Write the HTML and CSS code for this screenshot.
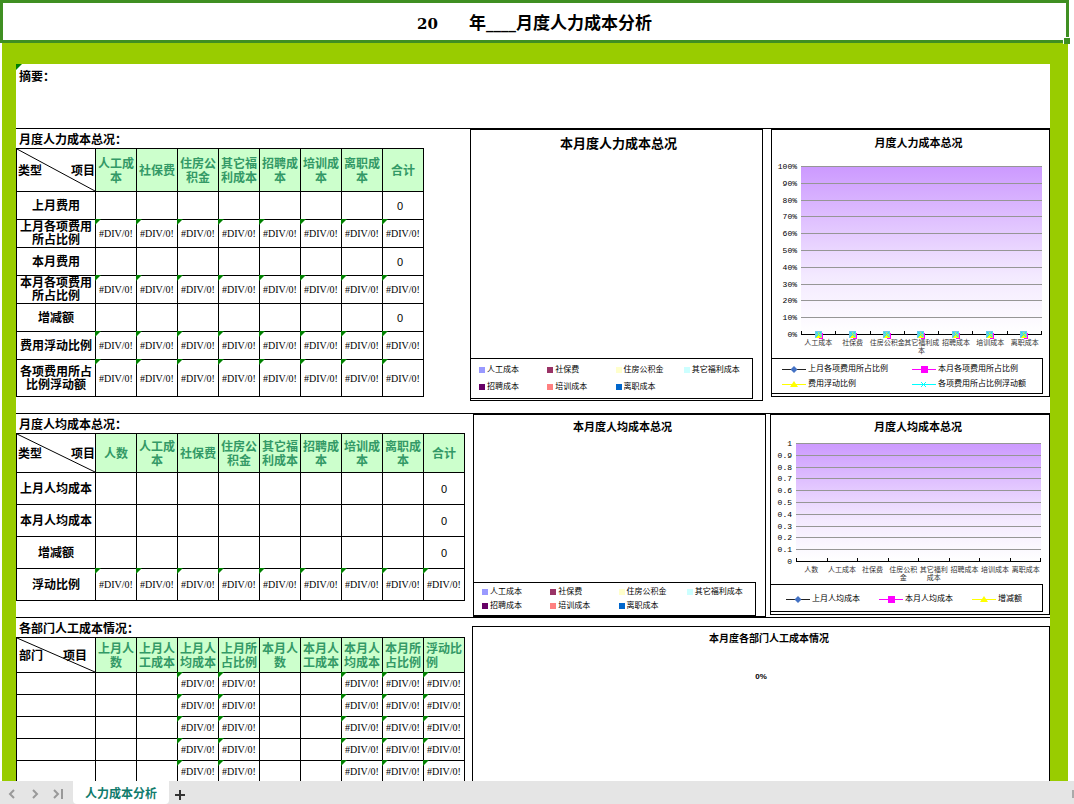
FILE: index.html
```
<!DOCTYPE html>
<html lang="zh-CN">
<head>
<meta charset="utf-8">
<title>人力成本分析</title>
<link rel="stylesheet" href="styles.css">
</head>
<body>
<svg class="defs" width="0" height="0" aria-hidden="true">
  <symbol id="k-diamond" viewBox="0 0 24 8"><path d="M0 4.5H24" stroke="#222" stroke-width="1"/><path d="M12 1l3.500 3.500-3.500 3.500-3.500-3.500z" fill="#4472c4"/></symbol>
  <symbol id="k-square" viewBox="0 0 24 8"><path d="M0 4.500H24" stroke="#f0f" stroke-width="1"/><path d="M9 1h7v7H9z" fill="#f0f"/></symbol>
  <symbol id="k-triangle" viewBox="0 0 24 8"><path d="M0 4.500H24" stroke="#ff0" stroke-width="1"/><path d="M12 1l4 6H8z" fill="#ff0"/></symbol>
  <symbol id="k-cross" viewBox="0 0 24 8"><path d="M0 4.500H24M9 2l5 5M14 2l-5 5" stroke="#0ff" stroke-width="1"/></symbol>
  <symbol id="k-point" viewBox="0 0 8 8"><path d="M4 2h4v6H4z" fill="#f0f"/><path d="M0 0h7v7H0z" fill="#6fc8e8"/><path d="M4 1l3 6H1z" fill="#ff0"/><path d="M1 1l5 5M6 1L1 6" stroke="#1ee" stroke-width="1"/></symbol>
</svg>
<main class="sheet">
  <h1 class="title"><span class="latin">20</span><span class="blank"></span>年<span class="latin">____</span>月度人力成本分析</h1>
  <div class="frame">
    <div class="content">
      <section class="summary flag">摘要：</section>

      <section class="block block-total">
        <div class="data">
          <h2>月度人力成本总况：</h2>
          <table class="grid cols8">
            <thead><tr class="r43"><th class="corner"><svg viewBox="0 0 100 100" preserveAspectRatio="none"><path d="M0 0L100 100"/></svg><span class="pair"><span>类型</span><span>项目</span></span></th><th>人工成本</th><th>社保费</th><th>住房公积金</th><th>其它福利成本</th><th>招聘成本</th><th>培训成本</th><th>离职成本</th><th>合计</th></tr></thead>
            <tbody>
              <tr class="r28"><th>上月费用</th><td></td><td></td><td></td><td></td><td></td><td></td><td></td><td class="sum">0</td></tr>
              <tr class="r28 err"><th>上月各项费用所占比例</th><td>#DIV/0!</td><td>#DIV/0!</td><td>#DIV/0!</td><td>#DIV/0!</td><td>#DIV/0!</td><td>#DIV/0!</td><td>#DIV/0!</td><td>#DIV/0!</td></tr>
              <tr class="r28"><th>本月费用</th><td></td><td></td><td></td><td></td><td></td><td></td><td></td><td class="sum">0</td></tr>
              <tr class="r28 err"><th>本月各项费用所占比例</th><td>#DIV/0!</td><td>#DIV/0!</td><td>#DIV/0!</td><td>#DIV/0!</td><td>#DIV/0!</td><td>#DIV/0!</td><td>#DIV/0!</td><td>#DIV/0!</td></tr>
              <tr class="r28"><th>增减额</th><td></td><td></td><td></td><td></td><td></td><td></td><td></td><td class="sum">0</td></tr>
              <tr class="r28 err"><th>费用浮动比例</th><td>#DIV/0!</td><td>#DIV/0!</td><td>#DIV/0!</td><td>#DIV/0!</td><td>#DIV/0!</td><td>#DIV/0!</td><td>#DIV/0!</td><td>#DIV/0!</td></tr>
              <tr class="r37 err"><th>各项费用所占比例浮动额</th><td>#DIV/0!</td><td>#DIV/0!</td><td>#DIV/0!</td><td>#DIV/0!</td><td>#DIV/0!</td><td>#DIV/0!</td><td>#DIV/0!</td><td>#DIV/0!</td></tr>
            </tbody>
          </table>
        </div>
        <figure class="chart pie pie-total">
          <figcaption class="big">本月度人力成本总况</figcaption>
          <ul class="legend squares">
            <li><i class="c1"></i>人工成本</li><li><i class="c2"></i>社保费</li><li><i class="c3"></i>住房公积金</li><li><i class="c4"></i>其它福利成本</li>
            <li><i class="c5"></i>招聘成本</li><li><i class="c6"></i>培训成本</li><li><i class="c7"></i>离职成本</li>
          </ul>
        </figure>
        <figure class="chart line line-total">
          <figcaption>月度人力成本总况</figcaption>
          <div class="plotrow">
            <div class="yaxis"><span>100%</span><span>90%</span><span>80%</span><span>70%</span><span>60%</span><span>50%</span><span>40%</span><span>30%</span><span>20%</span><span>10%</span><span>0%</span></div>
            <div class="plot">
              <div class="rules"><b></b><b></b><b></b><b></b><b></b><b></b><b></b><b></b><b></b><b></b></div>
              <div class="ticks"><span><svg><use href="#k-point"/></svg></span><span><svg><use href="#k-point"/></svg></span><span><svg><use href="#k-point"/></svg></span><span><svg><use href="#k-point"/></svg></span><span><svg><use href="#k-point"/></svg></span><span><svg><use href="#k-point"/></svg></span><span><svg><use href="#k-point"/></svg></span></div>
            </div>
          </div>
          <div class="xaxis"><span>人工成本</span><span>社保费</span><span>住房公积金</span><span>其它福利成<br>本</span><span>招聘成本</span><span>培训成本</span><span>离职成本</span></div>
          <ul class="legend keys two">
            <li><svg><use href="#k-diamond"/></svg>上月各项费用所占比例</li><li><svg><use href="#k-square"/></svg>本月各项费用所占比例</li>
            <li><svg><use href="#k-triangle"/></svg>费用浮动比例</li><li><svg><use href="#k-cross"/></svg>各项费用所占比例浮动额</li>
          </ul>
        </figure>
      </section>

      <section class="block block-avg">
        <div class="data">
          <h2>月度人均成本总况：</h2>
          <table class="grid cols9">
            <thead><tr class="r39"><th class="corner"><svg viewBox="0 0 100 100" preserveAspectRatio="none"><path d="M0 0L100 100"/></svg><span class="pair"><span>类型</span><span>项目</span></span></th><th>人数</th><th>人工成本</th><th>社保费</th><th>住房公积金</th><th>其它福利成本</th><th>招聘成本</th><th>培训成本</th><th>离职成本</th><th>合计</th></tr></thead>
            <tbody>
              <tr class="r32"><th>上月人均成本</th><td></td><td></td><td></td><td></td><td></td><td></td><td></td><td></td><td class="sum">0</td></tr>
              <tr class="r32"><th>本月人均成本</th><td></td><td></td><td></td><td></td><td></td><td></td><td></td><td></td><td class="sum">0</td></tr>
              <tr class="r32"><th>增减额</th><td></td><td></td><td></td><td></td><td></td><td></td><td></td><td></td><td class="sum">0</td></tr>
              <tr class="r32 err"><th>浮动比例</th><td>#DIV/0!</td><td>#DIV/0!</td><td>#DIV/0!</td><td>#DIV/0!</td><td>#DIV/0!</td><td>#DIV/0!</td><td>#DIV/0!</td><td>#DIV/0!</td><td>#DIV/0!</td></tr>
            </tbody>
          </table>
        </div>
        <figure class="chart pie pie-avg">
          <figcaption>本月度人均成本总况</figcaption>
          <ul class="legend squares">
            <li><i class="c1"></i>人工成本</li><li><i class="c2"></i>社保费</li><li><i class="c3"></i>住房公积金</li><li><i class="c4"></i>其它福利成本</li>
            <li><i class="c5"></i>招聘成本</li><li><i class="c6"></i>培训成本</li><li><i class="c7"></i>离职成本</li>
          </ul>
        </figure>
        <figure class="chart line line-avg">
          <figcaption>月度人均成本总况</figcaption>
          <div class="plotrow">
            <div class="yaxis"><span>1</span><span>0.9</span><span>0.8</span><span>0.7</span><span>0.6</span><span>0.5</span><span>0.4</span><span>0.3</span><span>0.2</span><span>0.1</span><span>0</span></div>
            <div class="plot">
              <div class="rules"><b></b><b></b><b></b><b></b><b></b><b></b><b></b><b></b><b></b><b></b></div>
              <div class="ticks"><span></span><span></span><span></span><span></span><span></span><span></span><span></span><span></span></div>
            </div>
          </div>
          <div class="xaxis"><span>人数</span><span>人工成本</span><span>社保费</span><span>住房公积<br>金</span><span>其它福利<br>成本</span><span>招聘成本</span><span>培训成本</span><span>离职成本</span></div>
          <ul class="legend keys three">
            <li><svg><use href="#k-diamond"/></svg>上月人均成本</li><li><svg><use href="#k-square"/></svg>本月人均成本</li><li><svg><use href="#k-triangle"/></svg>增减额</li>
          </ul>
        </figure>
      </section>

      <section class="block block-dept">
        <div class="data">
          <h2>各部门人工成本情况：</h2>
          <table class="grid cols9">
            <thead><tr class="r35"><th class="corner"><svg viewBox="0 0 100 100" preserveAspectRatio="none"><path d="M0 0L100 100"/></svg><span class="pair inner"><span>部门</span><span>项目</span></span></th><th>上月人数</th><th>上月人工成本</th><th>上月人均成本</th><th>上月所占比例</th><th>本月人数</th><th>本月人工成本</th><th>本月人均成本</th><th>本月所占比例</th><th class="start">浮动比例</th></tr></thead>
            <tbody>
              <tr class="r22"><th></th><td></td><td></td><td class="e">#DIV/0!</td><td class="e">#DIV/0!</td><td></td><td></td><td class="e">#DIV/0!</td><td class="e">#DIV/0!</td><td class="e">#DIV/0!</td></tr>
              <tr class="r22"><th></th><td></td><td></td><td class="e">#DIV/0!</td><td class="e">#DIV/0!</td><td></td><td></td><td class="e">#DIV/0!</td><td class="e">#DIV/0!</td><td class="e">#DIV/0!</td></tr>
              <tr class="r22"><th></th><td></td><td></td><td class="e">#DIV/0!</td><td class="e">#DIV/0!</td><td></td><td></td><td class="e">#DIV/0!</td><td class="e">#DIV/0!</td><td class="e">#DIV/0!</td></tr>
              <tr class="r22"><th></th><td></td><td></td><td class="e">#DIV/0!</td><td class="e">#DIV/0!</td><td></td><td></td><td class="e">#DIV/0!</td><td class="e">#DIV/0!</td><td class="e">#DIV/0!</td></tr>
              <tr class="r22"><th></th><td></td><td></td><td class="e">#DIV/0!</td><td class="e">#DIV/0!</td><td></td><td></td><td class="e">#DIV/0!</td><td class="e">#DIV/0!</td><td class="e">#DIV/0!</td></tr>
            </tbody>
          </table>
        </div>
        <figure class="chart dept">
          <figcaption>本月度各部门人工成本情况</figcaption>
          <p>0%</p>
        </figure>
      </section>
    </div>
  </div>
</main>
<nav class="tabs">
  <button class="nav" aria-label="上一张"><svg viewBox="0 0 8 10"><path d="M6 1L2 5l4 4"/></svg></button>
  <button class="nav" aria-label="下一张"><svg viewBox="0 0 8 10"><path d="M2 1l4 4-4 4"/></svg></button>
  <button class="nav" aria-label="最后一张"><svg class="wide" viewBox="0 0 10 10"><path d="M1 1l4 4-4 4M9 0v10"/></svg></button>
  <button class="tab">人力成本分析</button>
  <button class="add" aria-label="新建工作表"><svg viewBox="0 0 10 10"><path d="M5 0v10M0 5h10"/></svg></button>
  <span class="grip"></span>
</nav>
</body>
</html>
```
FILE: styles.css
```
* { box-sizing: border-box; }
html, body { height: 100%; }
body {
  margin: 0;
  display: flex;
  flex-direction: column;
  overflow: hidden;
  background: #fff;
  color: #000;
  font-family: "Liberation Sans", "Noto Sans CJK SC", sans-serif;
  font-size: 12px;
  line-height: 14px;
}
h1, h2, p, ul, figure { margin: 0; padding: 0; }
ul { list-style: none; }
button { border: 0; padding: 0; background: none; font: inherit; }
.defs { position: absolute; }

.sheet {
  flex: 1;
  min-height: 0;
  overflow: hidden;
  display: flex;
  flex-direction: column;
  padding-right: 5px;
}
.title {
  position: relative;
  flex: none;
  border: 3px solid #3f8f22;
  height: 43px;
  padding-top: 4px;
  display: flex;
  justify-content: center;
  align-items: center;
  font-size: 17px;
  line-height: 24px;
}
.title::after {
  content: "";
  position: absolute;
  right: -4px;
  bottom: -4px;
  width: 6px;
  height: 6px;
  background: #3f8f22;
  border: solid #fff;
  border-width: 1px 0 0 1px;
}
.title .latin { font-family: "DejaVu Serif", serif; font-size: 15px; }
.title .blank { width: 31px; }
.frame {
  flex: 1 0 auto;
  display: flex;
  margin: 0 1px 0 2px;
  padding: 21px 18px 0 14px;
  background: #9c0;
}
.content { flex: 1; min-width: 0; background: #fff; }
.summary {
  position: relative;
  height: 64px;
  padding: 6px 3px;
  font-weight: bold;
}
.block { display: grid; border-top: 1px solid #000; }
.block-total { grid-template-columns: 454px 293fr 287fr; }
.block-avg { grid-template-columns: 457px 293fr 284fr; }
.block-dept { grid-template-columns: 456px 1fr; }
.data { padding-bottom: 16px; }
.block-dept .data { padding-bottom: 0; }
h2 { padding: 4px 3px 1px; font-size: 12px; line-height: 14px; }

.grid {
  table-layout: fixed;
  border-collapse: separate;
  border-spacing: 0;
  border-top: 1px solid #000;
  line-height: 14px;
}
.cols8 { width: 408px; }
.cols9 { width: 449px; }
.grid th, .grid td {
  position: relative;
  padding: 0;
  border: solid #000;
  border-width: 0 1px 1px 0;
  text-align: center;
  vertical-align: middle;
}
.grid th:first-child { width: 80px; border-left-width: 1px; }
.grid thead th { padding: 2px 2px 0; background: #cfc; color: #396; }
.grid thead th.start { text-align: left; }
.grid thead th.corner { padding: 2px 0 0; background: #fff; color: #000; }
.grid tbody th { padding: 1px 3px 0; line-height: 13px; }
.grid td { padding-top: 1px; font-family: "Liberation Serif", serif; font-size: 10px; line-height: 12px; }
.grid td.sum { font-family: "Liberation Sans", sans-serif; font-size: 11px; }
.cols8 td.sum { padding-right: 6px; }
.err td::before, .e::before, .flag::before {
  content: "";
  position: absolute;
  left: -1px;
  top: -1px;
  border-top: 6px solid #008000;
  border-right: 6px solid transparent;
}
.flag::before { left: 0; top: 0; }
.corner svg { position: absolute; left: 0; top: 0; width: 100%; height: 100%; }
.corner path { stroke: #000; stroke-width: 1; vector-effect: non-scaling-stroke; }
.pair { position: relative; display: flex; justify-content: space-between; padding: 0 0 0 1px; }
.pair.inner { padding: 0 8px 0 2px; }
.r43 { height: 43px; }
.r39 { height: 39px; }
.r37 { height: 37px; }
.r35 { height: 35px; }
.r32 { height: 32px; }
.r28 { height: 28px; }
.r22 { height: 22px; }

.chart { display: flex; flex-direction: column; border: 1px solid #000; }
figcaption { font-size: 11px; line-height: 14px; font-weight: bold; text-align: center; padding-top: 6px; }
figcaption.big { padding: 7px 0 0 4px; font-size: 13px; }
.pie { justify-content: space-between; }
.pie-avg figcaption { padding: 5px 0 0 6px; }
.line figcaption { padding-left: 16px; }
.line-avg figcaption { padding-top: 5px; }
.pie-total { margin-bottom: 12px; }
.line-total { margin-left: 8px; margin-bottom: 16px; }
.line-avg { margin-left: 4px; margin-bottom: 2px; }
.legend { border: solid #000; border-width: 1px 1px 1px 0; font-size: 8px; line-height: 10px; }
.legend li { display: flex; align-items: center; white-space: nowrap; }
.squares {
  margin: 0 9px 1px 0;
  padding: 6px 0 6px 8px;
  display: grid;
  grid-template-columns: repeat(4, 1fr);
  row-gap: 7px;
}
.pie-avg .squares { margin-bottom: 0; padding: 4px 0 4px 8px; row-gap: 4px; }
.squares i { width: 6px; height: 6px; margin-right: 2px; }
.c1 { background: #99f; }
.c2 { background: #936; }
.c3 { background: #ffc; }
.c4 { background: #cff; }
.c5 { background: #606; }
.c6 { background: #ff8080; }
.c7 { background: #06c; }

.plotrow { flex: 1; display: flex; margin: 16px 7px 0 0; }
.line-avg .plotrow { margin: 9px 8px 0 0; }
.yaxis {
  width: 29px;
  margin: -4px 0 -5px;
  padding-right: 4px;
  display: flex;
  flex-direction: column;
  justify-content: space-between;
  text-align: right;
  font-family: "Liberation Mono", monospace;
  font-size: 8px;
  line-height: 10px;
}
.line-avg .yaxis { width: 25px; }
.plot {
  flex: 1;
  display: flex;
  flex-direction: column;
  background: linear-gradient(#c9f, #f3e9ff 65%, #fff);
  border-bottom: 1px solid #000;
}
.rules { flex: 1; display: flex; flex-direction: column; }
.rules b { flex: 1; border-top: 1px solid #969696; }
.ticks { display: flex; height: 3px; margin-top: -3px; border-left: 1px solid #000; }
.ticks span { flex: 1; display: flex; justify-content: center; border-right: 1px solid #000; }
.ticks svg { flex: none; width: 8px; height: 8px; }
.xaxis {
  display: grid;
  grid-auto-flow: column;
  grid-auto-columns: minmax(0, 1fr);
  height: 23px;
  margin: 0 7px 0 29px;
  padding-top: 4px;
  font-size: 7px;
  line-height: 8px;
  text-align: center;
  white-space: nowrap;
  color: #333;
}
.line-avg .xaxis { height: 22px; margin: 0 8px 0 25px; }
.keys svg { width: 24px; height: 8px; margin-right: 2px; }
.keys.two {
  display: grid;
  grid-template-columns: 130fr 130fr;
  margin: 0 6px 2px 0;
  padding: 5px 0 4px 10px;
  row-gap: 5px;
}
.keys.three {
  display: grid;
  grid-template-columns: 93fr 93fr 70fr;
  margin: 0 6px 2px 0;
  padding: 9px 0 7px 15px;
}
.dept { margin-top: 8px; border-bottom: 0; }
.dept figcaption { font-size: 10px; padding: 5px 0 0 16px; }
.dept p { margin-top: 24px; text-align: center; font-size: 8px; font-weight: bold; }

.tabs {
  flex: none;
  display: flex;
  align-items: stretch;
  height: 23px;
  padding-left: 4px;
  background: #e5e5e5;
}
.nav { width: 15px; margin-right: 8px; }
.nav svg { display: block; width: 8px; height: 10px; margin: 3px auto 0; fill: none; stroke: #999; stroke-width: 2; }
.nav .wide { width: 10px; }
.tab { padding: 2px 12px 0; border-radius: 0 0 4px 4px; background: #fff; color: #0f7b6c; font-weight: bold; }
.add { padding: 0 6px; }
.add svg { display: block; width: 10px; height: 10px; margin-top: 4px; stroke: #333; stroke-width: 2; }
.grip { width: 2px; height: 8px; margin: 9px 0 0 auto; background: #aaa; }
```
